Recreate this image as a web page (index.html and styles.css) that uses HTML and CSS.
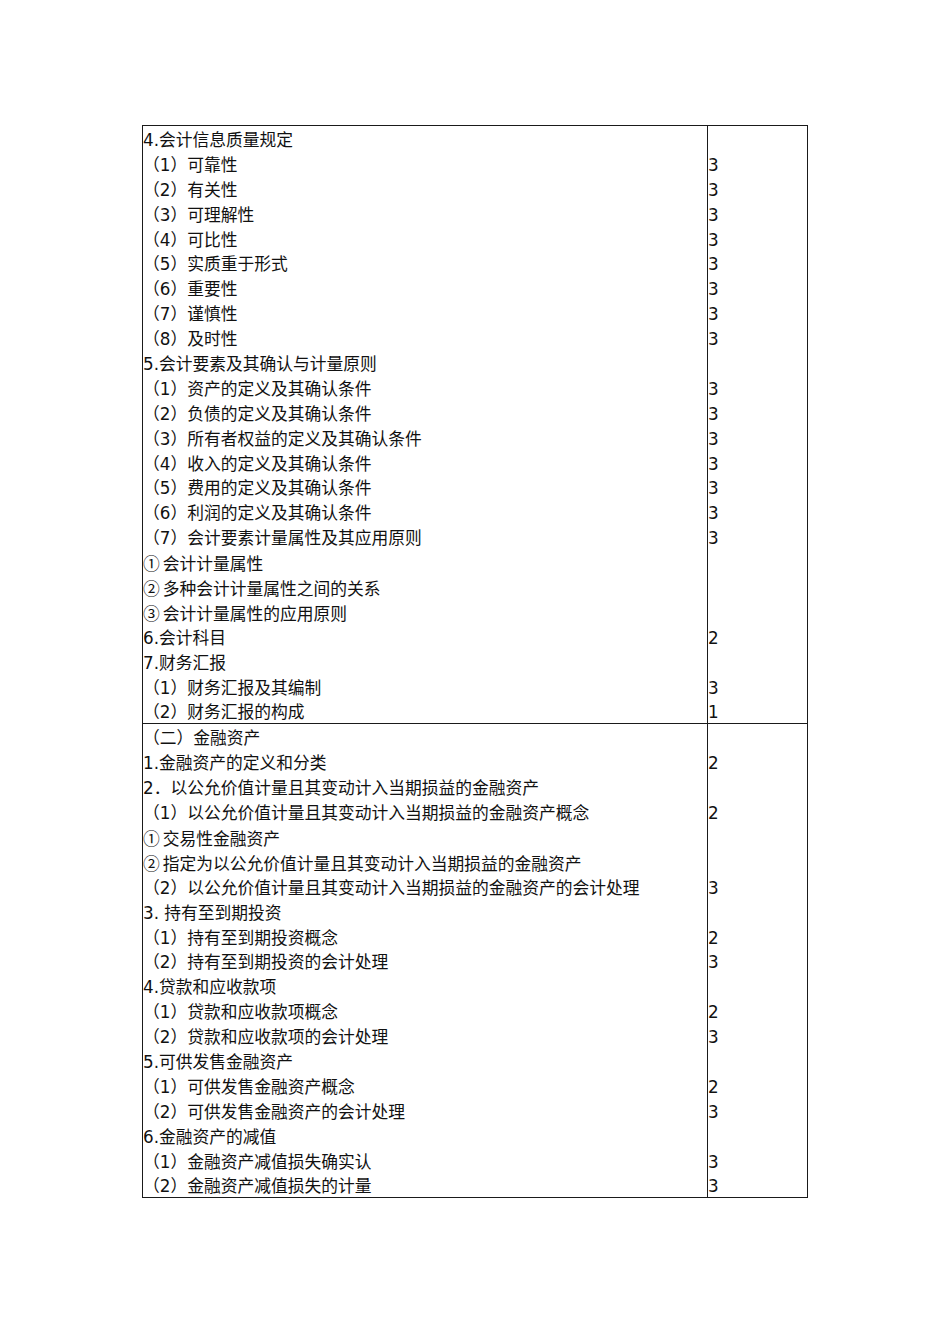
FILE: index.html
```html
<!DOCTYPE html>
<html lang="zh">
<head>
<meta charset="utf-8">
<link rel="stylesheet" href="styles.css">
</head>
<body>
<div class="sheet">
  <div class="section">
    <div class="col-text">
      <div class="line">4.会计信息质量规定</div>
      <div class="line">（1）可靠性</div>
      <div class="line">（2）有关性</div>
      <div class="line">（3）可理解性</div>
      <div class="line">（4）可比性</div>
      <div class="line">（5）实质重于形式</div>
      <div class="line">（6）重要性</div>
      <div class="line">（7）谨慎性</div>
      <div class="line">（8）及时性</div>
      <div class="line">5.会计要素及其确认与计量原则</div>
      <div class="line">（1）资产的定义及其确认条件</div>
      <div class="line">（2）负债的定义及其确认条件</div>
      <div class="line">（3）所有者权益的定义及其确认条件</div>
      <div class="line">（4）收入的定义及其确认条件</div>
      <div class="line">（5）费用的定义及其确认条件</div>
      <div class="line">（6）利润的定义及其确认条件</div>
      <div class="line">（7）会计要素计量属性及其应用原则</div>
      <div class="line"><span class="circ">①</span>会计计量属性</div>
      <div class="line"><span class="circ">②</span>多种会计计量属性之间的关系</div>
      <div class="line"><span class="circ">③</span>会计计量属性的应用原则</div>
      <div class="line">6.会计科目</div>
      <div class="line">7.财务汇报</div>
      <div class="line">（1）财务汇报及其编制</div>
      <div class="line">（2）财务汇报的构成</div>
    </div>
    <div class="col-num">
      <div class="line"></div>
      <div class="line">3</div>
      <div class="line">3</div>
      <div class="line">3</div>
      <div class="line">3</div>
      <div class="line">3</div>
      <div class="line">3</div>
      <div class="line">3</div>
      <div class="line">3</div>
      <div class="line"></div>
      <div class="line">3</div>
      <div class="line">3</div>
      <div class="line">3</div>
      <div class="line">3</div>
      <div class="line">3</div>
      <div class="line">3</div>
      <div class="line">3</div>
      <div class="line"></div>
      <div class="line"></div>
      <div class="line"></div>
      <div class="line">2</div>
      <div class="line"></div>
      <div class="line">3</div>
      <div class="line">1</div>
    </div>
  </div>
  <div class="section section-next">
    <div class="col-text">
      <div class="line">（二）金融资产</div>
      <div class="line">1.金融资产的定义和分类</div>
      <div class="line">2．以公允价值计量且其变动计入当期损益的金融资产</div>
      <div class="line">（1）以公允价值计量且其变动计入当期损益的金融资产概念</div>
      <div class="line"><span class="circ">①</span>交易性金融资产</div>
      <div class="line"><span class="circ">②</span>指定为以公允价值计量且其变动计入当期损益的金融资产</div>
      <div class="line">（2）以公允价值计量且其变动计入当期损益的金融资产的会计处理</div>
      <div class="line">3. 持有至到期投资</div>
      <div class="line">（1）持有至到期投资概念</div>
      <div class="line">（2）持有至到期投资的会计处理</div>
      <div class="line">4.贷款和应收款项</div>
      <div class="line">（1）贷款和应收款项概念</div>
      <div class="line">（2）贷款和应收款项的会计处理</div>
      <div class="line">5.可供发售金融资产</div>
      <div class="line">（1）可供发售金融资产概念</div>
      <div class="line">（2）可供发售金融资产的会计处理</div>
      <div class="line">6.金融资产的减值</div>
      <div class="line">（1）金融资产减值损失确实认</div>
      <div class="line">（2）金融资产减值损失的计量</div>
    </div>
    <div class="col-num">
      <div class="line"></div>
      <div class="line">2</div>
      <div class="line"></div>
      <div class="line">2</div>
      <div class="line"></div>
      <div class="line"></div>
      <div class="line">3</div>
      <div class="line"></div>
      <div class="line">2</div>
      <div class="line">3</div>
      <div class="line"></div>
      <div class="line">2</div>
      <div class="line">3</div>
      <div class="line"></div>
      <div class="line">2</div>
      <div class="line">3</div>
      <div class="line"></div>
      <div class="line">3</div>
      <div class="line">3</div>
    </div>
  </div>
</div>
</body>
</html>
```

FILE: styles.css
```css
html, body {
  margin: 0;
  padding: 0;
  background: #ffffff;
}

body {
  font-family: "DejaVu Sans", "Noto Sans CJK SC", sans-serif;
  font-size: 16.75px;
  color: #111111;
}

.sheet {
  margin: 125px 0 0 142px;
  width: 666px;
  border: 1px solid #1a1a1a;
  box-sizing: border-box;
}

.section {
  display: grid;
  grid-template-columns: 565px 99px;
}

.section-next {
  border-top: 1px solid #1a1a1a;
}

.col-text {
  border-right: 1px solid #1a1a1a;
  padding-left: 0;
}

.col-num {
  padding-left: 0;
}

.line {
  box-sizing: border-box;
  height: 24.9px;
  padding-top: 4px;
  line-height: 20.9px;
  white-space: nowrap;
}

.circ {
  font-family: "Noto Sans CJK SC", sans-serif;
  margin-right: 3px;
}
```
